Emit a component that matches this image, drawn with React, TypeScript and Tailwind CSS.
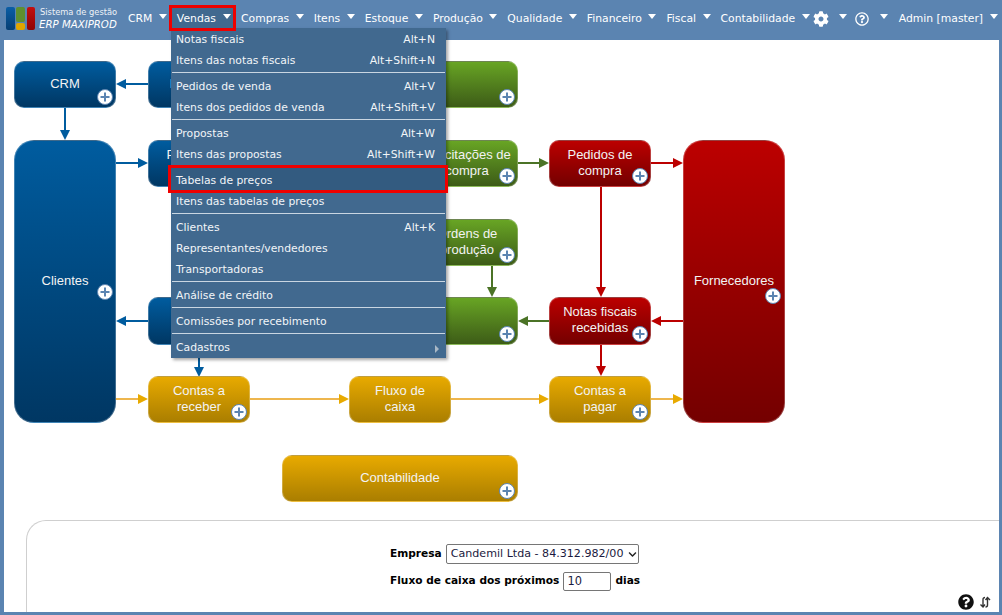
import { FaChevronDown, FaCog, FaQuestionCircle, FaRegQuestionCircle } from 'react-icons/fa';

const tahoma = { fontFamily: '"DejaVu Sans", sans-serif' };

const palette = {
  blue: 'from-[#005c9f] to-[#003763]',
  green: 'from-[#68a524] to-[#3d5c17]',
  red: 'from-[#bc0000] to-[#740000]',
  orange: 'from-[#e8aa00] to-[#aa7e00]',
};

function Caret() {
  return (
    <span className="mb-[6px] inline-block h-0 w-0 border-x-[4.5px] border-t-[5px] border-x-transparent border-t-white" />
  );
}

function NavItem({ label, active }: { label: string; active?: boolean }) {
  return (
    <div
      className={`flex h-[26px] items-center gap-[6.5px] whitespace-nowrap pt-[2px] ${
        active
          ? 'relative z-10 -ml-[3px] bg-[#41698f] pl-[8px] pr-[5.5px] outline-[3px] -outline-offset-[3px] outline-[#ee0000]'
          : 'px-[5px]'
      }`}
    >
      <span>{label}</span>
      <Caret />
    </div>
  );
}

function Plus({ className }: { className: string }) {
  return (
    <span
      className={`absolute flex h-[16px] w-[16px] items-center justify-center rounded-full border border-[#5b84b1] bg-white ${className}`}
    >
      <svg width="10" height="10" viewBox="0 0 10 10">
        <path d="M5 0.5v9M0.5 5h9" stroke="#5b84b1" strokeWidth="2" />
      </svg>
    </span>
  );
}

function Box({
  color,
  className,
  plus,
  children,
}: {
  color: keyof typeof palette;
  className: string;
  plus: string;
  children: React.ReactNode;
}) {
  return (
    <div
      className={`absolute flex items-center justify-center border border-white/25 bg-linear-to-b pb-[2px] text-center text-[13px] leading-[16px] text-[#f3f3f3] ${palette[color]} ${className}`}
    >
      {children}
      <Plus className={plus} />
    </div>
  );
}

function Arrow({ d, head, color, line }: { d: string; head: string; color: string; line?: string }) {
  return (
    <g>
      <path d={d} stroke={line ?? color} strokeWidth="2" fill="none" />
      <polygon points={head} fill={color} />
    </g>
  );
}

function MenuRow({ label, keys }: { label: string; keys?: string }) {
  return (
    <div className="relative flex h-[21px] items-center justify-between pl-[5px] pr-[11px] pt-[4px]">
      <span>{label}</span>
      {keys && <span>{keys}</span>}
    </div>
  );
}

function Sep() {
  return <div className="mx-px my-[2px] h-px bg-[#c9d6e2]" />;
}

export default function App() {
  return (
    <div className="relative flex h-[615px] w-[1002px] flex-col overflow-hidden bg-[#5b84b1] pb-[3px]" style={tahoma}>
      <header className="flex h-[40px] shrink-0 items-start text-[10.8px] text-white">
        <div className="flex w-[123px] shrink-0 items-start gap-[4px] pl-[6px] pt-[7px]">
          <div className="flex h-[23px] gap-px">
            <div className="w-[9px] rounded-[2px] bg-linear-to-b from-[#0a5ea6] to-[#063f74]" />
            <div className="flex w-[9px] flex-col gap-px">
              <div className="h-[15px] rounded-[2px] bg-[#5f8f2e]" />
              <div className="h-[7px] rounded-[2px] bg-[#e0a500]" />
            </div>
            <div className="ml-px w-[8px] rounded-[2px] bg-linear-to-b from-[#c40f0f] to-[#8e0505]" />
          </div>
          <div className="whitespace-nowrap">
            <div className="pl-px text-[8.3px] leading-[11px] text-[#eef2f7]">Sistema de gestão</div>
            <div className="text-[10.2px] italic leading-[14px]">ERP MAXIPROD</div>
          </div>
        </div>
        <nav className="flex items-center pt-[5px]">
          <NavItem label="CRM" />
          <NavItem label="Vendas" active />
          <NavItem label="Compras" />
          <NavItem label="Itens" />
          <NavItem label="Estoque" />
          <NavItem label="Produção" />
          <NavItem label="Qualidade" />
          <NavItem label="Financeiro" />
          <NavItem label="Fiscal" />
          <NavItem label="Contabilidade" />
          <div className="-ml-[2px] flex h-[26px] items-center gap-[10px] pr-[8px] pt-[2px]">
            <FaCog className="text-[16px]" />
            <Caret />
          </div>
          <div className="flex h-[26px] items-center gap-[11px] pr-[6px] pt-[2px]">
            <FaRegQuestionCircle className="text-[14px]" />
            <Caret />
          </div>
          <NavItem label="Admin [master]" />
        </nav>
      </header>

      <main className="ml-[4px] mr-[3px] flex min-h-0 flex-1 flex-col bg-white">
        <section className="relative h-[480px] shrink-0" style={{ fontFamily: '"Liberation Sans", sans-serif' }}>
          <svg className="absolute left-0 top-0 h-[520px] w-[995px]" viewBox="4 40 995 520">
            <Arrow color="#005c9f" d="M148 84H124" head="116,84 126,79 126,89" />
            <Arrow color="#005c9f" d="M65 108V132" head="65,140 60,130 70,130" />
            <Arrow color="#005c9f" d="M116 163H140" head="148,163 138,158 138,168" />
            <Arrow color="#005c9f" d="M148 321H124" head="116,321 126,316 126,326" />
            <Arrow color="#005c9f" d="M199 345V368" head="199,377 194,367 204,367" />
            <Arrow color="#e8aa00" line="#eeb64d" d="M116 399H140" head="148,399 138,394 138,404" />
            <Arrow color="#e8aa00" line="#eeb64d" d="M250 399H341" head="349,399 339,394 339,404" />
            <Arrow color="#e8aa00" line="#eeb64d" d="M451 399H541" head="549,399 539,394 539,404" />
            <Arrow color="#e8aa00" line="#eeb64d" d="M651 399H675" head="683,399 673,394 673,404" />
            <Arrow color="#4b7326" d="M518 163H541" head="549,163 539,158 539,168" />
            <Arrow color="#4b7326" d="M492 266V289" head="492,297 487,287 497,287" />
            <Arrow color="#4b7326" d="M549 321H526" head="518,321 528,316 528,326" />
            <Arrow color="#bc0000" d="M651 163H675" head="683,163 673,158 673,168" />
            <Arrow color="#bc0000" d="M601 187V289" head="601,297 596,287 606,287" />
            <Arrow color="#bc0000" d="M683 321H659" head="651,321 661,316 661,326" />
            <Arrow color="#bc0000" d="M601 345V368" head="601,376 596,366 606,366" />
          </svg>

          <Box color="blue" className="left-[10px] top-[21px] h-[47px] w-[102px] rounded-[10px]" plus="right-[2px] bottom-[2px]">CRM</Box>
          <Box color="blue" className="left-[144px] top-[21px] h-[47px] w-[102px] rounded-[10px]" plus="right-[2px] bottom-[2px]">Propostas</Box>
          <Box color="green" className="left-[278px] top-[21px] h-[47px] w-[236px] rounded-[10px]" plus="right-[2px] bottom-[2px]">Itens</Box>
          <Box color="blue" className="left-[10px] top-[100px] h-[283px] w-[102px] rounded-[20px]" plus="right-[2px] top-[143px]">Clientes</Box>
          <Box color="blue" className="left-[144px] top-[100px] h-[47px] w-[102px] rounded-[10px]" plus="right-[2px] bottom-[2px]">Pedidos de<br />venda</Box>
          <Box color="green" className="left-[412px] top-[100px] h-[47px] w-[102px] rounded-[10px]" plus="right-[2px] bottom-[2px]">Solicitações de<br />compra</Box>
          <Box color="red" className="left-[545px] top-[100px] h-[47px] w-[102px] rounded-[10px]" plus="right-[2px] bottom-[2px]">Pedidos de<br />compra</Box>
          <Box color="red" className="left-[679px] top-[100px] h-[283px] w-[102px] rounded-[20px]" plus="right-[3px] top-[147px]">Fornecedores</Box>
          <Box color="green" className="left-[412px] top-[179px] h-[47px] w-[102px] rounded-[10px]" plus="right-[2px] bottom-[2px]">Ordens de<br />produção</Box>
          <Box color="blue" className="left-[144px] top-[257px] h-[48px] w-[102px] rounded-[10px]" plus="right-[2px] bottom-[2px]">Notas<br />fiscais</Box>
          <Box color="green" className="left-[278px] top-[257px] h-[48px] w-[236px] rounded-[10px]" plus="right-[2px] bottom-[2px]">Estoque</Box>
          <Box color="red" className="left-[545px] top-[257px] h-[48px] w-[102px] rounded-[10px]" plus="right-[2px] bottom-[2px]">Notas fiscais<br />recebidas</Box>
          <Box color="orange" className="left-[144px] top-[336px] h-[47px] w-[102px] rounded-[10px]" plus="right-[2px] bottom-[2px]">Contas a<br />receber</Box>
          <Box color="orange" className="left-[345px] top-[336px] h-[47px] w-[102px] rounded-[10px]" plus="hidden">Fluxo de<br />caixa</Box>
          <Box color="orange" className="left-[545px] top-[336px] h-[47px] w-[102px] rounded-[10px]" plus="right-[2px] bottom-[2px]">Contas a<br />pagar</Box>
          <Box color="orange" className="left-[278px] top-[415px] h-[47px] w-[236px] rounded-[10px]" plus="right-[2px] bottom-[2px]">Contabilidade</Box>
        </section>

        <section className="relative ml-[22px] flex-1 rounded-tl-[20px] border-l border-t border-[#cfcfcf] text-[11px]">
          <div className="ml-[363px] w-[252px] pt-[22px] font-bold text-black">
            <div className="flex h-[22px] items-center gap-[4px]">
              <span className="text-[10.6px]">Empresa</span>
              <div className="relative h-[20px] w-[193px] shrink-0">
                <select className="h-full w-full appearance-none rounded-[2px] border border-[#767676] bg-white pl-[4px] text-[11.1px] font-normal text-[#1a1a40]">
                  <option>Candemil Ltda - 84.312.982/00</option>
                </select>
                <FaChevronDown className="pointer-events-none absolute right-[2px] top-[6px] text-[9px] text-[#222]" />
              </div>
            </div>
            <div className="mt-[5px] flex h-[22px] items-center gap-[4px] whitespace-nowrap text-[10.6px]">
              <span>Fluxo de caixa dos próximos</span>
              <input
                defaultValue="10"
                className="h-[19px] w-[48px] shrink-0 rounded-[2px] border border-[#767676] px-[3px] text-[11.4px] font-normal text-[#1a1a40]"
              />
              <span>dias</span>
            </div>
          </div>
          <div className="absolute bottom-[2px] right-[8px] flex items-center gap-[5px] text-[#111]">
            <FaQuestionCircle className="text-[16px]" />
            <svg width="12" height="12" viewBox="0 0 12 12" fill="none" stroke="#333" strokeWidth="1.4">
              <path d="M4 11V3.5A2 2 0 0 1 6 1.5M1.5 8.5L4 11L6 8.5" />
              <path d="M8.5 1.5V9A2 2 0 0 1 6.5 11M6.5 4L8.5 1.5L11 4" />
            </svg>
          </div>
        </section>
      </main>

      <div className="absolute left-[171px] top-[28px] w-[275px] bg-[#41698f] pb-px text-[10.8px] text-[#f2f5f8] shadow-[2px_2px_3px_rgba(0,0,0,0.35)]">
        <MenuRow label="Notas fiscais" keys="Alt+N" />
        <MenuRow label="Itens das notas fiscais" keys="Alt+Shift+N" />
        <Sep />
        <MenuRow label="Pedidos de venda" keys="Alt+V" />
        <MenuRow label="Itens dos pedidos de venda" keys="Alt+Shift+V" />
        <Sep />
        <MenuRow label="Propostas" keys="Alt+W" />
        <MenuRow label="Itens das propostas" keys="Alt+Shift+W" />
        <Sep />
        <div className="relative">
          <div className="absolute -bottom-[3px] -left-[3px] -right-[2px] -top-[4px] border-[3px] border-[#ee0000] bg-[#335b80]" />
          <MenuRow label="Tabelas de preços" />
        </div>
        <MenuRow label="Itens das tabelas de preços" />
        <Sep />
        <MenuRow label="Clientes" keys="Alt+K" />
        <MenuRow label="Representantes/vendedores" />
        <MenuRow label="Transportadoras" />
        <Sep />
        <MenuRow label="Análise de crédito" />
        <Sep />
        <MenuRow label="Comissões por recebimento" />
        <Sep />
        <div className="relative">
          <MenuRow label="Cadastros" />
          <span className="absolute right-[7px] top-[9px] h-0 w-0 border-y-[4px] border-l-[4px] border-y-transparent border-l-[#a9b8c6]" />
        </div>
      </div>
    </div>
  );
}
